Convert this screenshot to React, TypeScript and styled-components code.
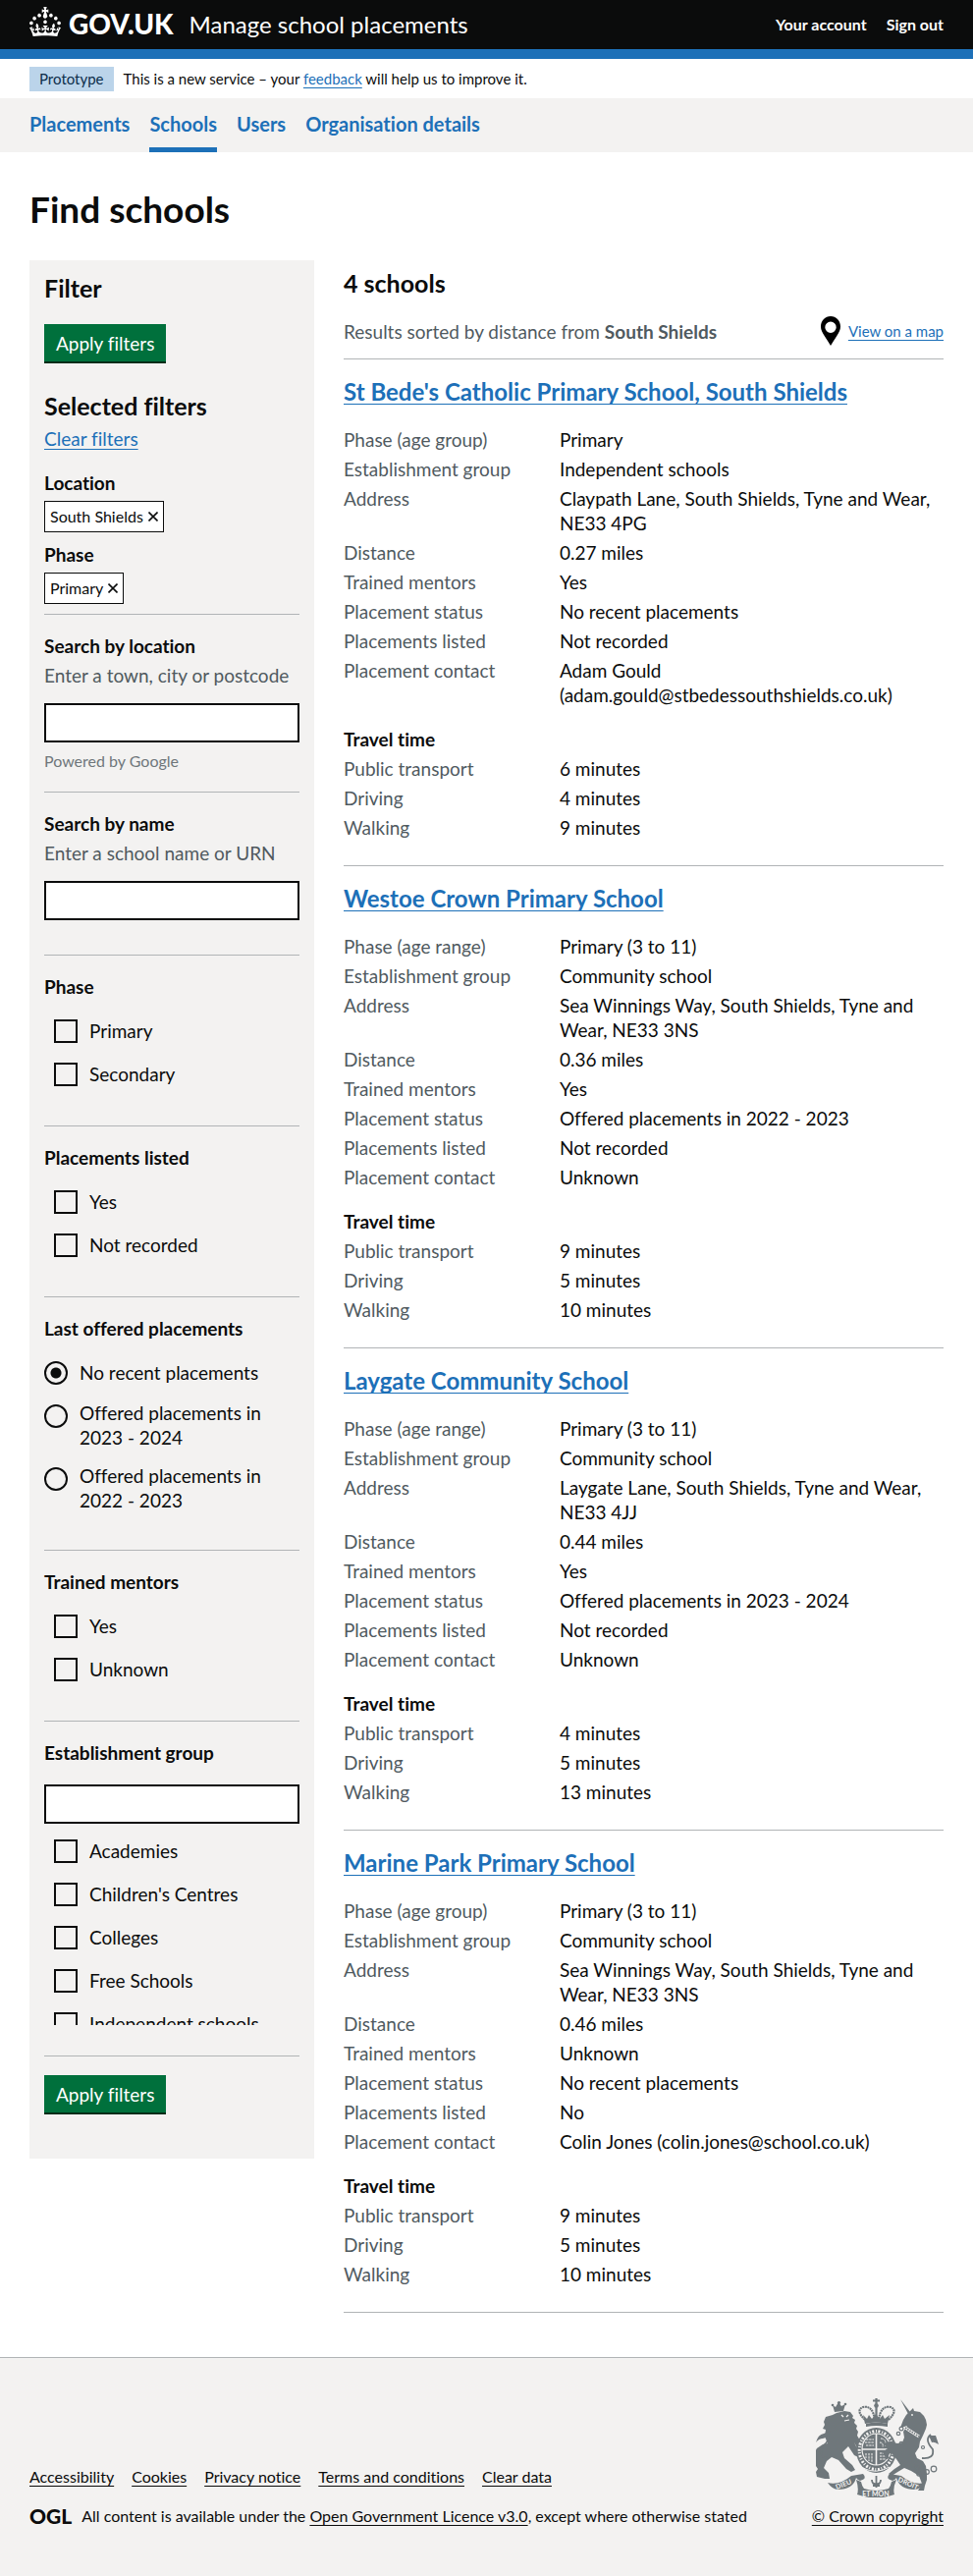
import React from "react";
import styled, { createGlobalStyle, css } from "styled-components";

const Global = createGlobalStyle`
  *, *::before, *::after { box-sizing: border-box; }
  body { margin: 0; background: #f3f2f1; color: #0b0c0c; font-family: Lato, "Liberation Sans", sans-serif; font-size: 19px; line-height: 25px; font-variant-ligatures: none; }
  h1, h2, h3, p, dl, dd, ul, fieldset, legend { margin: 0; padding: 0; }
  ul { list-style: none; }
  fieldset { border: 0; min-width: 0; }
`;

const Link = styled.a<{ $dark?: boolean }>`
  color: ${(p) => (p.$dark ? "#0b0c0c" : "#1d70b8")};
  text-decoration: underline;
  text-decoration-thickness: 1px;
  text-underline-offset: 3px;
  text-decoration-skip-ink: none;
`;

const Header = styled.header`
  display: flex;
  align-items: center;
  height: 60px;
  padding: 0 30px;
  background: #0b0c0c;
  border-bottom: 10px solid #1d70b8;
`;
const Brand = styled.a`
  display: flex;
  align-items: flex-start;
  gap: 8px;
  margin-right: 16px;
  padding-bottom: 4px;
  color: #fff;
  text-decoration: none;
  font-weight: 900;
  font-size: 28px;
  line-height: 30px;
`;
const BrandName = styled.span`
  padding-top: 2px;
`;
const ServiceName = styled.a`
  color: #fff;
  text-decoration: none;
  font-size: 24px;
  line-height: 30px;
`;
const AccountNav = styled.nav`
  display: flex;
  gap: 20px;
  margin-left: auto;
  a { color: #fff; text-decoration: none; font-size: 16px; line-height: 20px; font-weight: 700; }
`;
const Banner = styled.div`
  display: flex;
  align-items: center;
  gap: 10px;
  height: 40px;
  padding: 0 30px;
  background: #fff;
  font-size: 15px;
  line-height: 20px;
`;
const PhaseTag = styled.strong`
  padding: 2px 10px 3px;
  background: #bbd4ea;
  color: #0c2d4a;
  font-weight: 400;
`;
const PrimaryNav = styled.nav`
  display: flex;
  gap: 20px;
  padding: 0 30px;
  background: #f3f2f1;
`;
const NavItem = styled.a<{ $current?: boolean }>`
  padding: 14px 0 11px;
  border-bottom: 5px solid ${(p) => (p.$current ? "#1d70b8" : "transparent")};
  color: #1d70b8;
  font-size: 20px;
  font-weight: 700;
  text-decoration: none;
`;

const Main = styled.main`
  padding: 38px 30px 45px;
  background: #fff;
`;
const Title = styled.h1`
  margin-bottom: 32px;
  font-size: 37px;
  line-height: 40px;
`;
const Columns = styled.div`
  display: grid;
  grid-template-columns: 290px minmax(0, 1fr);
  gap: 30px;
  align-items: start;
`;
const Aside = styled.form`
  padding: 13px 15px 45px;
  background: #f3f2f1;
`;
const HeadingM = styled.h2`
  font-size: 25px;
  line-height: 30px;
`;
const HeadingS = styled.h3`
  font-size: 19px;
  line-height: 25px;
`;
const Button = styled.button`
  display: block;
  height: 40px;
  padding: 0 12px;
  border: 0;
  border-bottom: 2px solid #002d18;
  background: #00703c;
  color: #fff;
  font: inherit;
`;
const TopApply = styled.div`
  margin: 22px 0 28px;
`;
const ClearFilters = styled.p`
  margin: 6px 0 20px;
`;
const SelectedGroup = styled.div`
  margin-bottom: 10px;
`;
const RemoveTag = styled.button`
  display: flex;
  align-items: center;
  gap: 5px;
  height: 32px;
  margin: 6px 0 0;
  padding: 0 5px;
  border: 1px solid #0b0c0c;
  background: #fff;
  color: #0b0c0c;
  font: inherit;
  font-size: 16px;
  line-height: 20px;
`;
const Section = styled.div<{ $tail: number }>`
  padding: 19px 0 ${(p) => p.$tail}px;
  border-top: 1px solid #b1b4b6;
`;
const FieldLabel = styled.label`
  display: block;
  margin-bottom: 5px;
  font-weight: 700;
`;
const Hint = styled.p`
  margin-bottom: 16px;
  color: #505a5f;
`;
const TextInput = styled.input`
  display: block;
  width: 100%;
  height: 40px;
  padding: 5px;
  border: 2px solid #0b0c0c;
  border-radius: 0;
  background: #fff;
  font: inherit;
`;
const Powered = styled.p`
  margin-top: 9px;
  color: #6f777b;
  font-size: 16px;
  line-height: 20px;
`;
const Legend = styled.legend`
  margin-bottom: 20px;
  font-weight: 700;
`;
const CheckList = styled.div`
  display: grid;
  gap: 19px;
  padding-left: 10px;
`;
const CheckRow = styled.label`
  display: flex;
  align-items: flex-end;
  gap: 12px;
`;
const RadioList = styled.div`
  display: grid;
  gap: 14px;
  margin-top: -3px;
`;
const RadioRow = styled.label`
  display: flex;
  align-items: flex-start;
  gap: 12px;
`;
const RadioText = styled.span`
  display: flex;
  align-items: center;
  min-height: 30px;
  max-width: 190px;
`;
const control = css`
  appearance: none;
  flex: none;
  width: 24px;
  height: 24px;
  margin: 0;
  border: 2px solid #0b0c0c;
`;
const Checkbox = styled.input.attrs({ type: "checkbox" })`
  ${control}
  &:checked { background: #0b0c0c; }
`;
const Radio = styled.input.attrs({ type: "radio", name: "last-offered" })`
  ${control}
  margin-top: 4px;
  border-radius: 50%;
  &:checked { background: radial-gradient(circle, #0b0c0c 5px, transparent 6px); }
`;
const ScrollBox = styled.div`
  height: 200px;
  margin-top: 5px;
  padding-top: 10px;
  overflow-y: auto;
  scrollbar-width: none;
`;

const ResultsColumn = styled.section`
  padding-top: 8px;
`;
const ResultsHead = styled.div`
  display: flex;
  align-items: center;
  justify-content: space-between;
  height: 40px;
  margin: 14px 0 8px;
  color: #505a5f;
`;
const MapLink = styled.div`
  display: flex;
  align-items: center;
  gap: 8px;
  font-size: 15px;
  line-height: 20px;
`;
const Results = styled.ul`
  border-top: 1px solid #b1b4b6;
`;
const Result = styled.li`
  padding: 18px 0 26px;
  border-bottom: 1px solid #b1b4b6;
  ${HeadingS} { margin: 20px 0 5px; }
`;
const SchoolName = styled(HeadingM)`
  margin-bottom: 21px;
  font-size: 24px;
`;
const Details = styled.dl`
  display: grid;
  grid-template-columns: 36% minmax(0, 1fr);
  row-gap: 5px;
  dt { color: #505a5f; }
  dd { overflow-wrap: break-word; padding-right: 12px; }
`;

const Footer = styled.footer`
  display: flex;
  align-items: flex-end;
  justify-content: space-between;
  padding: 40px 30px 51px;
  border-top: 1px solid #b1b4b6;
  font-size: 16px;
  line-height: 20px;
`;
const FooterLinks = styled.ul`
  display: flex;
  flex-wrap: wrap;
  gap: 18px;
  margin-bottom: 20px;
`;
const Licence = styled.div`
  display: flex;
  align-items: center;
  gap: 10px;
`;
const OglMark = styled.span`
  font-size: 21px;
  line-height: 20px;
  font-weight: 900;
`;
const Copyright = styled.div`
  display: flex;
  flex-direction: column;
  align-items: center;
  gap: 9px;
`;

const Crown = () => (
  <svg width="32" height="30" viewBox="0 0 32 30" fill="currentColor" aria-hidden="true">
    <path d="M22.6 10.4c-1 .4-2-.1-2.4-1-.4-.9.1-2 1-2.4.9-.4 2 .1 2.4 1s-.1 2-1 2.4m-5.9 6.7c-.9.4-2-.1-2.4-1-.4-.9.1-2 1-2.4.9-.4 2 .1 2.4 1s-.1 2-1 2.4m10.8-3.7c-1 .4-2-.1-2.4-1-.4-.9.1-2 1-2.4.9-.4 2 .1 2.4 1s0 2-1 2.4m3.3 4.8c-1 .4-2-.1-2.4-1-.4-.9.1-2 1-2.4.9-.4 2 .1 2.4 1s-.1 2-1 2.4M17 4.7l2.3 1.2V2.5l-2.3.7-.2-.2.9-3h-3.4l.9 3-.2.2c-.1.1-2.3-.7-2.3-.7v3.4L15 4.7c.1.1.1.2.2.2l-1.3 4c-.1.2-.1.4-.1.6 0 1.1.8 2 1.9 2.2h.7c1-.2 1.9-1.1 1.9-2.1 0-.2 0-.4-.1-.6l-1.3-4c-.1-.2 0-.2.1-.3m-7.6 5.7c.9.4 2-.1 2.4-1 .4-.9-.1-2-1-2.4-.9-.4-2 .1-2.4 1s0 2 1 2.4m-5 3c.9.4 2-.1 2.4-1 .4-.9-.1-2-1-2.4-.9-.4-2 .1-2.4 1s.1 2 1 2.4m-3.2 4.8c.9.4 2-.1 2.4-1 .4-.9-.1-2-1-2.4-.9-.4-2 .1-2.4 1s0 2 1 2.4m14.8 11c4.4 0 8.6.3 12.3.8 1.1-4.5 2.4-7 3.7-8.8l-2.5-.9c.2 1.3.3 1.9 0 2.7-.4-.4-.8-1.1-1.1-2.3l-1.2 4c.7-.5 1.3-.8 2-.9-1.1 2.5-2.6 3.1-3.5 3-1.1-.2-1.7-1.2-1.5-2.1.3-1.2 1.5-1.5 2.1-.1 1.1-2.3-.8-3-2-2.3 1.9-1.9 2.1-3.5.6-5.6-2.1 1.6-2.1 3.2-1.2 5.5-1.2-1.4-3.2-.6-2.5 1.6.9-1.4 2.1-.5 1.9.8-.2 1.1-1.7 2.1-3.5 1.9-2.7-.2-2.9-2.1-2.9-3.6.7-.1 1.9.5 2.9 1.9l.4-4.3c-1.1 1.1-2.1 1.4-3.2 1.4.4-1.2 2.1-3 2.1-3h-5.4s1.7 1.9 2.1 3c-1.1 0-2.1-.2-3.2-1.4l.4 4.3c1-1.4 2.2-2 2.9-1.9-.1 1.5-.2 3.4-2.9 3.6-1.9.2-3.4-.8-3.5-1.9-.2-1.3 1-2.2 1.9-.8.7-2.3-1.2-3-2.5-1.6.9-2.2.9-3.9-1.2-5.5-1.5 2-1.3 3.7.6 5.6-1.2-.7-3.1 0-2 2.3.6-1.4 1.8-1.1 2.1.1.2.9-.3 1.9-1.5 2.1-.9.2-2.4-.5-3.5-3 .6 0 1.2.3 2 .9l-1.2-4c-.3 1.1-.7 1.9-1.1 2.3-.3-.8-.2-1.4 0-2.7l-2.9.9C1.3 23 2.6 25.5 3.7 30c3.7-.5 7.9-.8 12.3-.8" />
  </svg>
);
const Pin = () => (
  <svg width="20" height="30" viewBox="0 0 20 30" aria-hidden="true">
    <path fillRule="evenodd" d="M10 0C4.5 0 0 4.5 0 10.5C0 14 1.5 16.5 4 20.5Q7 25 10 30Q13 25 16 20.5C18.5 16.5 20 14 20 10.5C20 4.5 15.5 0 10 0ZM10 5.5a5.7 5.7 0 1 1 0 11.4a5.7 5.7 0 1 1 0-11.4Z" />
  </svg>
);
const Cross = () => (
  <svg width="10" height="10" viewBox="0 0 10 10" stroke="#0b0c0c" strokeWidth="1.6" aria-hidden="true">
    <path d="M0.5 0.5L9.5 9.5M9.5 0.5L0.5 9.5" />
  </svg>
);

const INK = "#6f777b";
const PAPER = "#f3f2f1";
const Crest = () => (
  <svg width="125" height="102" viewBox="0 0 125 102" fill={INK} stroke="none" aria-hidden="true">
    {/* lion */}
    <path d="M17 8l3 2 3-5 3 4 4-2-2 7-9 1z" />
    <circle cx="17" cy="8" r="1.3" /><circle cx="23.5" cy="5.5" r="1.6" /><circle cx="30" cy="7" r="1.3" />
    <path d="M17 18l4-2 8-2 6 1 3 4-1 2 3 2-1 3 3 3-1 3 2 3-1 4 3 5-2 2 4 3-1 3-4-1-3-5 5 10 2 3-3 2-4-2-6-9-6 6 2 6 8 7 3 5-4 2-5-3-8-9-7-3-5 4-3 7 5 5 1 6-5 0-8-2-1-5 2-3-4-6-1-8 4-7 6-4 5-1-3-7 1-7-3-1 2-4-1-3 2-5z" />
    <path d="M26 18l2 2M33 18l-2 2M29 24l5-1" stroke={PAPER} strokeWidth="1.2" fill="none" />
    <path d="M11 62Q2 60 7 50Q15 44 12 36" stroke={INK} strokeWidth="1.6" fill="none" />
    <path d="M0 46Q2 38 8 37L15 34Q12 41 7 42Q3 42 0 46z" />
    {/* crown */}
    <g fill="none" stroke={INK}>
      <path d="M50 23Q40 13 48 10Q58 8 60 23M74 23Q84 13 76 10Q66 8 64 23" strokeWidth="2.2" strokeDasharray="2 0.6" />
      <path d="M61.5 1V20M58 3.5H65" strokeWidth="2.2" />
    </g>
    <circle cx="61.5" cy="8.5" r="2.3" />
    <path d="M48 18l4 4 2-4 3 4 4-5 4 5 3-4 2 4 5-4-2 9Q61 24 50 27z" />
    <path d="M51 27Q61 24 73 27V30Q61 28 51 30z" />
    {/* garter and shield */}
    <ellipse cx="61.5" cy="54" rx="20.5" ry="23" />
    <ellipse cx="61.5" cy="54" rx="17.3" ry="19.5" fill="none" stroke={PAPER} strokeWidth="3" strokeDasharray="2 1.8 1 1.5" />
    <ellipse cx="61.5" cy="53" rx="14.5" ry="16" fill={INK} stroke={PAPER} strokeWidth="1.2" />
    <path d="M61.5 37V69M47 53H76" stroke={PAPER} strokeWidth="1.6" />
    <path d="M51 43h8M50 46h9M51 49h8M65 57h8M65 60h8M65 63h6M66 42q6 0 5 8M65 46q4 0 3 5M51 57v5M54 57v8M57 57v9" stroke={PAPER} strokeWidth="1" strokeDasharray="2.4 0.8" fill="none" />
    <path d="M48 72Q61 79 75 71" stroke={PAPER} strokeWidth="1" fill="none" />
    {/* unicorn */}
    <path d="M86 2L96 15L94 17z" />
    <path d="M89 23l3-5 4-4 3-3 1 3 6 1 4 4 2 4 1 5-1 4-3 7-3 6-1 6-4 6 2 5 6 3 3 5 1 8 0 6-2 6-1 5-6 0 4-7-3-8-8-5-7-3-5 3-8 5-3-2 6-5 6-4-4-6-5-6-4 1 2 4-3 1-4-7 5-4-4-5 6-2 8 2 5-1 2-5-1-6 4-6-3 1-4 1z" />
    <path d="M91 31L105 40" stroke={PAPER} strokeWidth="3" /><path d="M91 31L105 40" stroke={INK} strokeWidth="1.5" strokeDasharray="1.6 1" />
    <circle cx="98" cy="18" r="0.9" fill={PAPER} />
    <g fill="none" stroke={INK} strokeWidth="1.2">
      <path d="M108 62Q121 63 119 53Q110 43 117 38" strokeWidth="1.8" />
      <circle cx="87" cy="32" r="1.9" /><circle cx="84" cy="37" r="1.7" /><circle cx="87" cy="47" r="1.7" />
      <circle cx="109" cy="51" r="1.5" /><circle cx="103" cy="72" r="2.2" /><circle cx="105" cy="78" r="2.2" />
      <circle cx="113" cy="76" r="2.3" /><circle cx="120" cy="73" r="2.8" />
    </g>
    <path d="M115 39l7 0 3 9q-5-3-7-2z" />
    {/* motto ribbon */}
    <path d="M12 87Q24 90 36 80L48 78Q53 83 45 85Q42 84 41 82Q38 94 22 94Q16 93 12 87z" />
    <path d="M111 87Q99 90 87 80L75 78Q70 83 78 85Q81 84 82 82Q85 94 101 94Q107 93 111 87z" />
    <path d="M41 84Q44 93 42 99Q61 106 80 99Q78 93 82 84L77 86Q76 91 74 93Q61 97 49 93Q47 91 46 86z" />
    <path d="M61.5 80v12M57 84q0 5 4.5 4q4.5 1 4.5-4M58 90h7" stroke={INK} strokeWidth="1.8" fill="none" />
    <g fill={PAPER} fontSize="7" fontWeight="700" textAnchor="middle">
      <text x="29" y="91" transform="rotate(-22 29 91)">DIEU</text>
      <text x="61" y="101">ET MON</text>
      <text x="93" y="90" transform="rotate(24 93 90)">DROIT</text>
    </g>
  </svg>
);

type Row = [string, string];
type School = { name: string; rows: Row[]; travel: Row[] };
const rowNames = ["Establishment group", "Address", "Distance", "Trained mentors", "Placement status", "Placements listed", "Placement contact"];
const makeSchool = (name: string, phaseLabel: string, values: string[], times: number[]): School => ({
  name,
  rows: [phaseLabel, ...rowNames].map((k, i): Row => [k, values[i]]),
  travel: ["Public transport", "Driving", "Walking"].map((k, i): Row => [k, `${times[i]} minutes`]),
});
const schools = [
  makeSchool("St Bede's Catholic Primary School, South Shields", "Phase (age group)",
    ["Primary", "Independent schools", "Claypath Lane, South Shields, Tyne and Wear, NE33 4PG", "0.27 miles", "Yes", "No recent placements", "Not recorded", "Adam Gould (adam.gould@stbedessouthshields.co.uk)"], [6, 4, 9]),
  makeSchool("Westoe Crown Primary School", "Phase (age range)",
    ["Primary (3 to 11)", "Community school", "Sea Winnings Way, South Shields, Tyne and Wear, NE33 3NS", "0.36 miles", "Yes", "Offered placements in 2022 - 2023", "Not recorded", "Unknown"], [9, 5, 10]),
  makeSchool("Laygate Community School", "Phase (age range)",
    ["Primary (3 to 11)", "Community school", "Laygate Lane, South Shields, Tyne and Wear, NE33 4JJ", "0.44 miles", "Yes", "Offered placements in 2023 - 2024", "Not recorded", "Unknown"], [4, 5, 13]),
  makeSchool("Marine Park Primary School", "Phase (age group)",
    ["Primary (3 to 11)", "Community school", "Sea Winnings Way, South Shields, Tyne and Wear, NE33 3NS", "0.46 miles", "Unknown", "No recent placements", "No", "Colin Jones (colin.jones@school.co.uk)"], [9, 5, 10]),
];

const DetailRows = ({ rows }: { rows: Row[] }) => (
  <Details>
    {rows.map(([k, v]) => (
      <React.Fragment key={k}><dt>{k}</dt><dd>{v}</dd></React.Fragment>
    ))}
  </Details>
);
const Checks = ({ items }: { items: string[] }) => (
  <CheckList>
    {items.map((t) => (
      <CheckRow key={t}><Checkbox /><span>{t}</span></CheckRow>
    ))}
  </CheckList>
);
const CheckSection = ({ title, items }: { title: string; items: string[] }) => (
  <Section $tail={40}>
    <fieldset><Legend>{title}</Legend><Checks items={items} /></fieldset>
  </Section>
);

export default function App() {
  return (
    <>
      <Global />
      <Header>
        <Brand href="#"><Crown /><BrandName>GOV.UK</BrandName></Brand>
        <ServiceName href="#">Manage school placements</ServiceName>
        <AccountNav><a href="#">Your account</a><a href="#">Sign out</a></AccountNav>
      </Header>
      <Banner>
        <PhaseTag>Prototype</PhaseTag>
        <span>This is a new service – your <Link href="#">feedback</Link> will help us to improve it.</span>
      </Banner>
      <PrimaryNav>
        <NavItem href="#">Placements</NavItem>
        <NavItem href="#" $current>Schools</NavItem>
        <NavItem href="#">Users</NavItem>
        <NavItem href="#">Organisation details</NavItem>
      </PrimaryNav>
      <Main>
        <Title>Find schools</Title>
        <Columns>
          <Aside>
            <HeadingM>Filter</HeadingM>
            <TopApply><Button type="button">Apply filters</Button></TopApply>
            <HeadingM>Selected filters</HeadingM>
            <ClearFilters><Link href="#">Clear filters</Link></ClearFilters>
            <SelectedGroup>
              <HeadingS>Location</HeadingS>
              <RemoveTag type="button">South Shields<Cross /></RemoveTag>
            </SelectedGroup>
            <SelectedGroup>
              <HeadingS>Phase</HeadingS>
              <RemoveTag type="button">Primary<Cross /></RemoveTag>
            </SelectedGroup>
            <Section $tail={21}>
              <FieldLabel htmlFor="location">Search by location</FieldLabel>
              <Hint id="location-hint">Enter a town, city or postcode</Hint>
              <TextInput id="location" type="text" aria-describedby="location-hint" />
              <Powered>Powered by Google</Powered>
            </Section>
            <Section $tail={35}>
              <FieldLabel htmlFor="name">Search by name</FieldLabel>
              <Hint id="name-hint">Enter a school name or URN</Hint>
              <TextInput id="name" type="text" aria-describedby="name-hint" />
            </Section>
            <CheckSection title="Phase" items={["Primary", "Secondary"]} />
            <CheckSection title="Placements listed" items={["Yes", "Not recorded"]} />
            <Section $tail={38}>
              <fieldset>
                <Legend>Last offered placements</Legend>
                <RadioList>
                  <RadioRow><Radio defaultChecked /><RadioText>No recent placements</RadioText></RadioRow>
                  <RadioRow><Radio /><RadioText>Offered placements in 2023 - 2024</RadioText></RadioRow>
                  <RadioRow><Radio /><RadioText>Offered placements in 2022 - 2023</RadioText></RadioRow>
                </RadioList>
              </fieldset>
            </Section>
            <CheckSection title="Trained mentors" items={["Yes", "Unknown"]} />
            <Section $tail={31}>
              <fieldset>
                <Legend>Establishment group</Legend>
                <TextInput type="text" aria-label="Search establishment groups" />
                <ScrollBox>
                  <Checks items={["Academies", "Children's Centres", "Colleges", "Free Schools", "Independent schools"]} />
                </ScrollBox>
              </fieldset>
            </Section>
            <Section $tail={0}><Button type="button">Apply filters</Button></Section>
          </Aside>
          <ResultsColumn>
            <HeadingM>4 schools</HeadingM>
            <ResultsHead>
              <p>Results sorted by distance from <strong>South Shields</strong></p>
              <MapLink><Pin /><Link href="#">View on a map</Link></MapLink>
            </ResultsHead>
            <Results>
              {schools.map((s) => (
                <Result key={s.name}>
                  <SchoolName><Link href="#">{s.name}</Link></SchoolName>
                  <DetailRows rows={s.rows} />
                  <HeadingS>Travel time</HeadingS>
                  <DetailRows rows={s.travel} />
                </Result>
              ))}
            </Results>
          </ResultsColumn>
        </Columns>
      </Main>
      <Footer>
        <div>
          <FooterLinks>
            {["Accessibility", "Cookies", "Privacy notice", "Terms and conditions", "Clear data"].map((t) => (
              <li key={t}><Link $dark href="#">{t}</Link></li>
            ))}
          </FooterLinks>
          <Licence>
            <OglMark>OGL</OglMark>
            <span>All content is available under the <Link $dark href="#">Open Government Licence v3.0</Link>, except where otherwise stated</span>
          </Licence>
        </div>
        <Copyright>
          <Crest />
          <Link $dark href="#">© Crown copyright</Link>
        </Copyright>
      </Footer>
    </>
  );
}
